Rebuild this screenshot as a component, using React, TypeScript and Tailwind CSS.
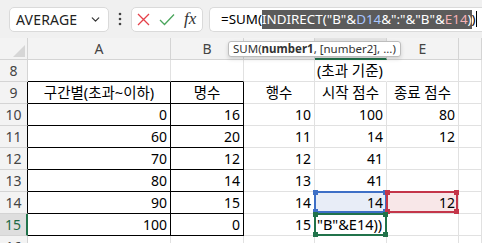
import { ChevronDown } from "lucide-react"

type Kind = "plain" | "blue" | "red" | "edit" | "overflow"

const COLS = ["A", "B", "C", "D", "E", ""]

const rows: { n: number; v: string[] }[] = [
  { n: 8, v: ["", "", "", "(초과 기준)", "", ""] },
  { n: 9, v: ["구간별(초과~이하)", "명수", "행수", "시작 점수", "종료 점수", ""] },
  { n: 10, v: ["0", "16", "10", "100", "80", ""] },
  { n: 11, v: ["60", "20", "11", "14", "12", ""] },
  { n: 12, v: ["70", "12", "12", "41", "", ""] },
  { n: 13, v: ["80", "14", "13", "41", "", ""] },
  { n: 14, v: ["90", "15", "14", "14", "12", ""] },
  { n: 15, v: ["100", "0", "15", '"B"&E14))', "", ""] },
  { n: 16, v: ["", "", "", "", "", ""] },
]

function kindOf(r: number, c: number): Kind {
  if (r === 8 && c === 3) return "overflow"
  if (r === 14 && c === 3) return "blue"
  if (r === 14 && c === 4) return "red"
  if (r === 15 && c === 3) return "edit"
  return "plain"
}

// table A9:B15 has black borders
function inTable(r: number, c: number) {
  return c <= 1 && r >= 9 && r <= 15
}

function Corners({ color }: { color: string }) {
  return (
    <>
      <span className={`absolute -left-[3px] -top-[3px] w-[5px] h-[5px] ${color}`} />
      <span className={`absolute -right-[3px] -top-[3px] w-[5px] h-[5px] ${color}`} />
      <span className={`absolute -left-[3px] -bottom-[3px] w-[5px] h-[5px] ${color}`} />
      <span className={`absolute -right-[3px] -bottom-[3px] w-[5px] h-[5px] ${color}`} />
    </>
  )
}

function Cell({ r, c, v }: { r: number; c: number; v: string }) {
  const kind = kindOf(r, c)
  const num = /^\d+$/.test(v)
  const right = inTable(r, c) ? "border-r-black" : kind === "overflow" ? "border-r-transparent" : "border-r-[#e1e1e1]"
  const bottom =
    inTable(r, c) || (r === 8 && c <= 1) ? "border-b-black" : "border-b-[#e1e1e1]"
  const align =
    kind === "overflow" || kind === "edit" ? "justify-start pl-[2px]" : num ? "justify-end pr-[3px]" : "justify-center"
  const bg = kind === "blue" ? "bg-[#e8edf7]" : kind === "red" ? "bg-[#f8e7e8]" : "bg-white"

  return (
    <div
      className={`relative h-[22px] flex items-center border-r border-b ${right} ${bottom} ${align} ${bg} ${
        kind === "overflow" ? "z-10 overflow-visible" : ""
      }`}
    >
      <span className={`whitespace-nowrap text-black leading-none ${num ? "text-[14px]" : "text-[14.5px]"}`}>{v}</span>
      {kind === "blue" ? (
        <div className="absolute -left-[1px] -top-[1px] -right-[1px] bottom-0 border-2 border-[#3e6fc6] z-20">
          <Corners color="bg-[#3e6fc6]" />
        </div>
      ) : null}
      {kind === "red" ? (
        <div className="absolute -left-[1px] -top-[1px] right-0 bottom-0 border-2 border-[#c4364a] z-20">
          <Corners color="bg-[#c4364a]" />
        </div>
      ) : null}
      {kind === "edit" ? (
        <div className="absolute -left-[1px] -top-[1px] -right-[1px] -bottom-[1px] border-2 border-[#21734b] z-20">
          <Corners color="bg-[#21734b]" />
        </div>
      ) : null}
    </div>
  )
}

export default function App() {
  return (
    <div className="w-[482px] h-[243px] overflow-hidden bg-white font-['Noto_Sans','Noto_Sans_CJK_KR',sans-serif]">
      {/* formula bar */}
      <div className="h-[38px] bg-[#f0f0f0] flex items-center pl-[9px]">
        <div className="w-[100px] h-[25px] bg-white border border-[#dadada] rounded-[5px] flex items-center justify-between pl-[6px] pr-[6px]">
          <span className="text-[14px] text-[#222] tracking-[0.2px]">AVERAGE</span>
          <ChevronDown className="w-[13px] h-[13px] text-[#333]" strokeWidth={2.2} />
        </div>
        <div className="w-[22px] flex justify-center">
          <svg width="4" height="14" viewBox="0 0 4 14">
            <circle cx="2" cy="2" r="1.3" fill="#444" />
            <circle cx="2" cy="7" r="1.3" fill="#444" />
            <circle cx="2" cy="12" r="1.3" fill="#444" />
          </svg>
        </div>
        <div className="w-[72px] h-[25px] bg-white border border-[#dadada] rounded-[5px] flex items-center pl-[5px] gap-[9px]">
          <svg width="13" height="13" viewBox="0 0 13 13">
            <path d="M1 1 L12 12 M12 1 L1 12" stroke="#e5414a" strokeWidth="1.3" fill="none" />
          </svg>
          <svg width="16" height="13" viewBox="0 0 16 13">
            <path d="M1 7 L5.5 11.5 L15 1.5" stroke="#4aa55c" strokeWidth="1.3" fill="none" />
          </svg>
          <span className="font-['Liberation_Serif',serif] italic text-[17px] text-[#333] leading-none -mt-[2px]">
            fx
          </span>
        </div>
        <div className="ml-[6px] flex-1 h-[25px] bg-white border border-r-0 border-[#dadada] rounded-l-[5px] flex items-center pl-[11px] whitespace-nowrap text-[13.4px] text-black">
          <span>=SUM(</span>
          <span className="bg-[#5b5b5b] text-white leading-[19px]">
            INDIRECT(&quot;B&quot;&amp;<span className="text-[#a9c6ff]">D14</span>&amp;&quot;:&quot;&amp;&quot;B&quot;&amp;
            <span className="text-[#f3b0b4]">E14</span>)
          </span>
          <span>)</span>
          <span className="w-px h-[16px] bg-black" />
        </div>
      </div>

      {/* sheet */}
      <div className="relative">
        <div className="grid grid-cols-[28px_143px_73px_71px_72px_72px_1fr]">
          {/* header row */}
          <div className="h-[22px] bg-[#f3f3f3] border-r border-b border-[#d4d4d4] flex items-end justify-end p-[2px]">
            <svg width="12" height="12" viewBox="0 0 12 12">
              <polygon points="12,0 12,12 0,12" fill="#d6d6d6" />
            </svg>
          </div>
          {COLS.map((c, i) => (
            <div
              key={i}
              className={`h-[22px] flex items-center justify-center border-r text-[14px] text-[#444] ${
                i === 3
                  ? "bg-[#e3e3e3] border-b-2 border-b-[#21734b] border-r-[#d4d4d4]"
                  : "bg-[#f3f3f3] border-b border-[#d4d4d4]"
              }`}
            >
              {c}
            </div>
          ))}

          {rows.map((row) => (
            <div key={row.n} className="contents">
              <div
                className={`h-[22px] flex items-center justify-center border-b text-[14px] ${
                  row.n === 15
                    ? "bg-[#dedede] text-[#1d6a45] border-r-2 border-r-[#21734b] border-b-[#d4d4d4]"
                    : row.n >= 9 && row.n <= 14
                    ? "bg-[#f3f3f3] text-[#444] border-r border-r-black border-b-[#d4d4d4]"
                    : "bg-[#f3f3f3] text-[#444] border-r border-r-[#d4d4d4] border-b-[#d4d4d4]"
                }`}
              >
                {row.n}
              </div>
              {row.v.map((v, ci) => (
                <Cell key={ci} r={row.n} c={ci} v={v} />
              ))}
            </div>
          ))}
        </div>

        {/* function tooltip */}
        <div className="absolute left-[228px] top-[3px] z-30 h-[16px] px-[4px] flex items-center bg-white border border-[#bdbdbd] rounded-[3px] shadow-[0_2px_4px_rgba(0,0,0,0.15)] text-[11.5px] text-[#333] whitespace-nowrap leading-none">
          SUM(<b className="font-bold">number1</b>, [number2], ...)
        </div>
      </div>
    </div>
  )
}
